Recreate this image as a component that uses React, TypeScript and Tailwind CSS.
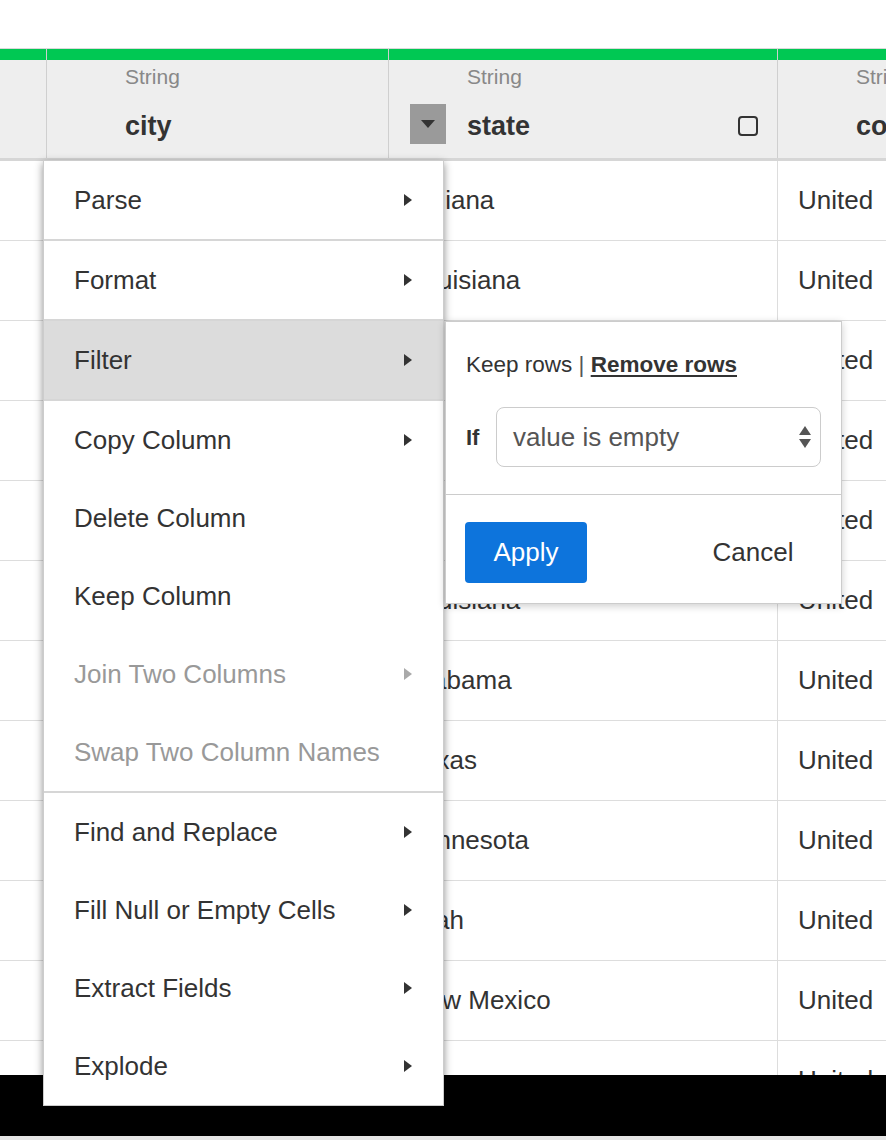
import React from "react";

const FONT = "font-['Liberation_Sans',Arial,Helvetica,sans-serif]";

// the city cells and rows 3-5 of state sit under the open menus, so they are left blank
const states = [
  "Indiana",
  "Louisiana",
  "",
  "",
  "",
  "Louisiana",
  "Alabama",
  "Texas",
  "Minnesota",
  "Utah",
  "New Mexico",
  "",
];

type MenuItem = { label: string; sub?: boolean; disabled?: boolean; active?: boolean };

const menuGroups: MenuItem[][] = [
  [{ label: "Parse", sub: true }],
  [{ label: "Format", sub: true }],
  [{ label: "Filter", sub: true, active: true }],
  [
    { label: "Copy Column", sub: true },
    { label: "Delete Column" },
    { label: "Keep Column" },
    { label: "Join Two Columns", sub: true, disabled: true },
    { label: "Swap Two Column Names", disabled: true },
  ],
  [
    { label: "Find and Replace", sub: true },
    { label: "Fill Null or Empty Cells", sub: true },
    { label: "Extract Fields", sub: true },
    { label: "Explode", sub: true },
  ],
];

const Caret = ({ disabled }: { disabled?: boolean }) => (
  <svg width="8" height="12" viewBox="0 0 8 12">
    <path d="M0 0 L8 6 L0 12 Z" fill={disabled ? "#aaaaaa" : "#333333"} />
  </svg>
);

const HeaderCell = ({
  name,
  width,
  showMenu,
  showCheck,
}: {
  name: string;
  width: string;
  showMenu?: boolean;
  showCheck?: boolean;
}) => (
  <div className={`${width} shrink-0 flex flex-col border-r border-[#cfcfcf]`}>
    <div className="h-[11px] bg-[#00c853]" />
    <div className="h-[98px] bg-[#eeeeee] flex items-end pl-[21px] pb-[14px] whitespace-nowrap overflow-hidden">
      <div className="w-[36px] h-[40px] shrink-0 flex items-center justify-center">
        {showMenu && (
          <div className="w-[36px] h-[40px] bg-[#9a9a9a] flex items-center justify-center">
            <svg width="14" height="8" viewBox="0 0 14 8">
              <path d="M0 0 L14 0 L7 8 Z" fill="#333333" />
            </svg>
          </div>
        )}
      </div>
      <div className="ml-[21px] flex-1 flex flex-col">
        <div className="text-[21px] leading-[24px] text-[#888888] -mt-[47px] mb-[21px]">String</div>
        <div className="flex items-center mb-[2px]">
          <span className="text-[27px] leading-[32px] font-bold text-[#333333] flex-1">{name}</span>
          {showCheck && (
            <span className="w-[20px] h-[20px] border-2 border-[#333333] rounded-[4px] mr-[19px]" />
          )}
        </div>
      </div>
    </div>
  </div>
);

export default function App() {
  return (
    <div className={`w-[886px] h-[1140px] bg-white overflow-hidden relative ${FONT} text-[#333333]`}>
      <div className="h-[48px]" />

      {/* table */}
      <div className="h-[1027px] overflow-hidden flex flex-col border-t border-[#d9d9d9]">
        <div className="flex border-b-[3px] border-[#d6d6d6]">
          <div className="w-[47px] shrink-0 flex flex-col border-r border-[#cfcfcf]">
            <div className="h-[11px] bg-[#00c853]" />
            <div className="h-[98px] bg-[#eeeeee]" />
          </div>
          <HeaderCell name="city" width="w-[342px]" />
          <HeaderCell name="state" width="w-[389px]" showMenu showCheck />
          <HeaderCell name="country" width="flex-1" />
        </div>

        {states.map((s, i) => (
          <div key={i} className="flex h-[80px] shrink-0 border-b border-[#dddddd] text-[26px]">
            <div className="w-[47px] shrink-0 border-r border-[#dddddd]" />
            <div className="w-[342px] shrink-0 border-r border-[#dddddd]" />
            <div className="w-[389px] shrink-0 border-r border-[#dddddd] flex items-center pl-5 whitespace-nowrap overflow-hidden">
              {s}
            </div>
            <div className="flex-1 flex items-center pl-5 whitespace-nowrap overflow-hidden">United</div>
          </div>
        ))}
      </div>

      {/* footer bar */}
      <div className="h-[61px] bg-black" />
      <div className="h-[4px] bg-[#e6e6e6]" />

      {/* column menu */}
      <div className="absolute left-[43px] top-[160px] w-[401px] bg-white border border-[#cccccc] shadow-[0_3px_8px_rgba(0,0,0,0.45)] z-10">
        {menuGroups.map((group, gi) => (
          <div key={gi} className={gi > 0 ? "border-t-2 border-[#d6d6d6]" : ""}>
            {group.map((item) => (
              <div
                key={item.label}
                className={`h-[78px] flex items-center justify-between pl-[30px] pr-[31px] text-[26px] ${
                  item.active ? "bg-[#dcdcdc]" : ""
                } ${item.disabled ? "text-[#999999]" : "text-[#333333]"}`}
              >
                <span>{item.label}</span>
                {item.sub && <Caret disabled={item.disabled} />}
              </div>
            ))}
          </div>
        ))}
      </div>

      {/* filter popover */}
      <div className="absolute left-[445px] top-[321px] w-[397px] bg-white border border-[#cccccc] shadow-[0_2px_8px_rgba(0,0,0,0.2)] z-20">
        <div className="px-[20px] pt-[30px] pb-[27px] border-b border-[#cccccc]">
          <div className="text-[22.5px] leading-[26px] text-[#333333]">
            Keep rows <span className="text-[#555555]">|</span>{" "}
            <span className="font-bold underline underline-offset-[3px]">Remove rows</span>
          </div>
          <div className="mt-[29px] flex items-center">
            <span className="text-[22px] font-bold w-[30px]">If</span>
            <div className="flex-1 h-[60px] border border-[#cccccc] rounded-[8px] flex items-center justify-between pl-[16px] pr-[8px]">
              <span className="text-[26px] text-[#555555]">value is empty</span>
              <svg width="14" height="22" viewBox="0 0 14 22">
                <path d="M7 0 L13 9 L1 9 Z" fill="#555555" />
                <path d="M1 13 L13 13 L7 22 Z" fill="#555555" />
              </svg>
            </div>
          </div>
        </div>
        <div className="flex items-center justify-between pl-[19px] pr-[27px] pt-[27px] pb-[20px]">
          <button className="w-[122px] h-[61px] rounded-[4px] bg-[#0d74dc] text-white text-[26px]">Apply</button>
          <button className="w-[122px] h-[61px] text-[26px] text-[#333333]">Cancel</button>
        </div>
      </div>
    </div>
  );
}
